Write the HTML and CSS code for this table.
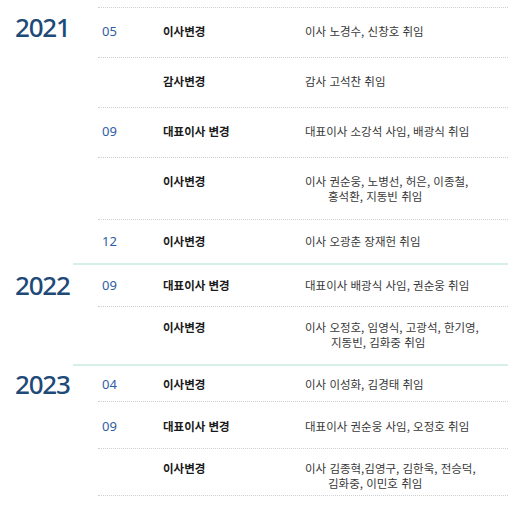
FILE: index.html
```html
<!DOCTYPE html>
<html lang="ko">
<head>
<meta charset="utf-8">
<link rel="stylesheet" href="styles.css">
</head>
<body>
<div class="history">
  <section class="block block--first">
    <div class="year year--first">2021</div>
    <div class="list">
      <div class="row row--top p-a">
        <div class="month">05</div><div class="title">이사변경</div><div class="desc">이사 노경수, 신창호 취임</div>
      </div>
      <div class="row p-a">
        <div class="month"></div><div class="title">감사변경</div><div class="desc">감사 고석찬 취임</div>
      </div>
      <div class="row p-a">
        <div class="month">09</div><div class="title">대표이사 변경</div><div class="desc">대표이사 소강석 사임, 배광식 취임</div>
      </div>
      <div class="row p-b">
        <div class="month"></div><div class="title">이사변경</div><div class="desc"><div>이사 권순웅, 노병선, 허은, 이종철,</div><div class="indent">홍석환, 지동빈 취임</div></div>
      </div>
      <div class="row row--last p-c">
        <div class="month">12</div><div class="title">이사변경</div><div class="desc">이사 오광춘 장재헌 취임</div>
      </div>
    </div>
  </section>
  <section class="block">
    <div class="year">2022</div>
    <div class="list">
      <div class="row p-d">
        <div class="month">09</div><div class="title">대표이사 변경</div><div class="desc">대표이사 배광식 사임, 권순웅 취임</div>
      </div>
      <div class="row row--last p-e">
        <div class="month"></div><div class="title">이사변경</div><div class="desc"><div>이사 오정호, 임영식, 고광석, 한기영,</div><div class="indent indent--wide">지동빈, 김화중 취임</div></div>
      </div>
    </div>
  </section>
  <section class="block">
    <div class="year year--third">2023</div>
    <div class="list">
      <div class="row p-f">
        <div class="month">04</div><div class="title">이사변경</div><div class="desc">이사 이성화, 김경태 취임</div>
      </div>
      <div class="row p-g">
        <div class="month">09</div><div class="title">대표이사 변경</div><div class="desc">대표이사 권순웅 사임, 오정호 취임</div>
      </div>
      <div class="row p-h">
        <div class="month"></div><div class="title">이사변경</div><div class="desc"><div>이사 김종혁,김영구, 김한욱, 전승덕,</div><div class="indent">김화중, 이민호 취임</div></div>
      </div>
    </div>
  </section>
</div>
</body>
</html>
```

FILE: styles.css
```css
html, body {
  margin: 0;
  padding: 0;
  background: #fff;
}

body {
  font-family: "Noto Sans CJK KR", "Noto Sans", sans-serif;
  color: #333;
}

.history {
  padding: 7px 22px 0 0;
}

.block {
  display: grid;
  grid-template-columns: 73px 1fr;
}

.block + .block .list {
  border-top: 2px solid #d6efe7;
}

.year {
  padding: 7px 0 0 15px;
  font-family: "Noto Sans", sans-serif;
  font-size: 26px;
  line-height: 30px;
  letter-spacing: -1.2px;
  color: #1e4a77;
  font-weight: 500;
}

.year--first {
  padding-top: 5px;
}

.year--third {
  padding-top: 5px;
}

.list {
  padding-left: 25px;
}

.row {
  display: grid;
  grid-template-columns: 61px 142px 1fr;
  padding-left: 4px;
  border-bottom: 1px dotted #d0d0d0;
  font-size: 11.5px;
  line-height: 15px;
}

.row--top {
  border-top: 1px dotted #d0d0d0;
}

.row--last {
  border-bottom: none;
}

.p-a { padding-top: 16px; padding-bottom: 18px; }
.p-b { padding-top: 16px; padding-bottom: 15px; }
.p-c { padding-top: 14px; padding-bottom: 14px; }
.p-d { padding-top: 13px; padding-bottom: 13px; }
.p-e { padding-top: 13px; padding-bottom: 14px; }
.p-f { padding-top: 11px; padding-bottom: 9px; }
.p-g { padding-top: 17px; padding-bottom: 14px; }
.p-h { padding-top: 12px; padding-bottom: 4px; }

.month {
  font-family: "Noto Sans", sans-serif;
  font-size: 13px;
  color: #2f5da6;
}

.title {
  font-weight: 700;
  color: #1a1a1a;
}

.desc {
  color: #383838;
}

.indent {
  padding-left: 23px;
}

.indent--wide {
  padding-left: 26px;
}
```
